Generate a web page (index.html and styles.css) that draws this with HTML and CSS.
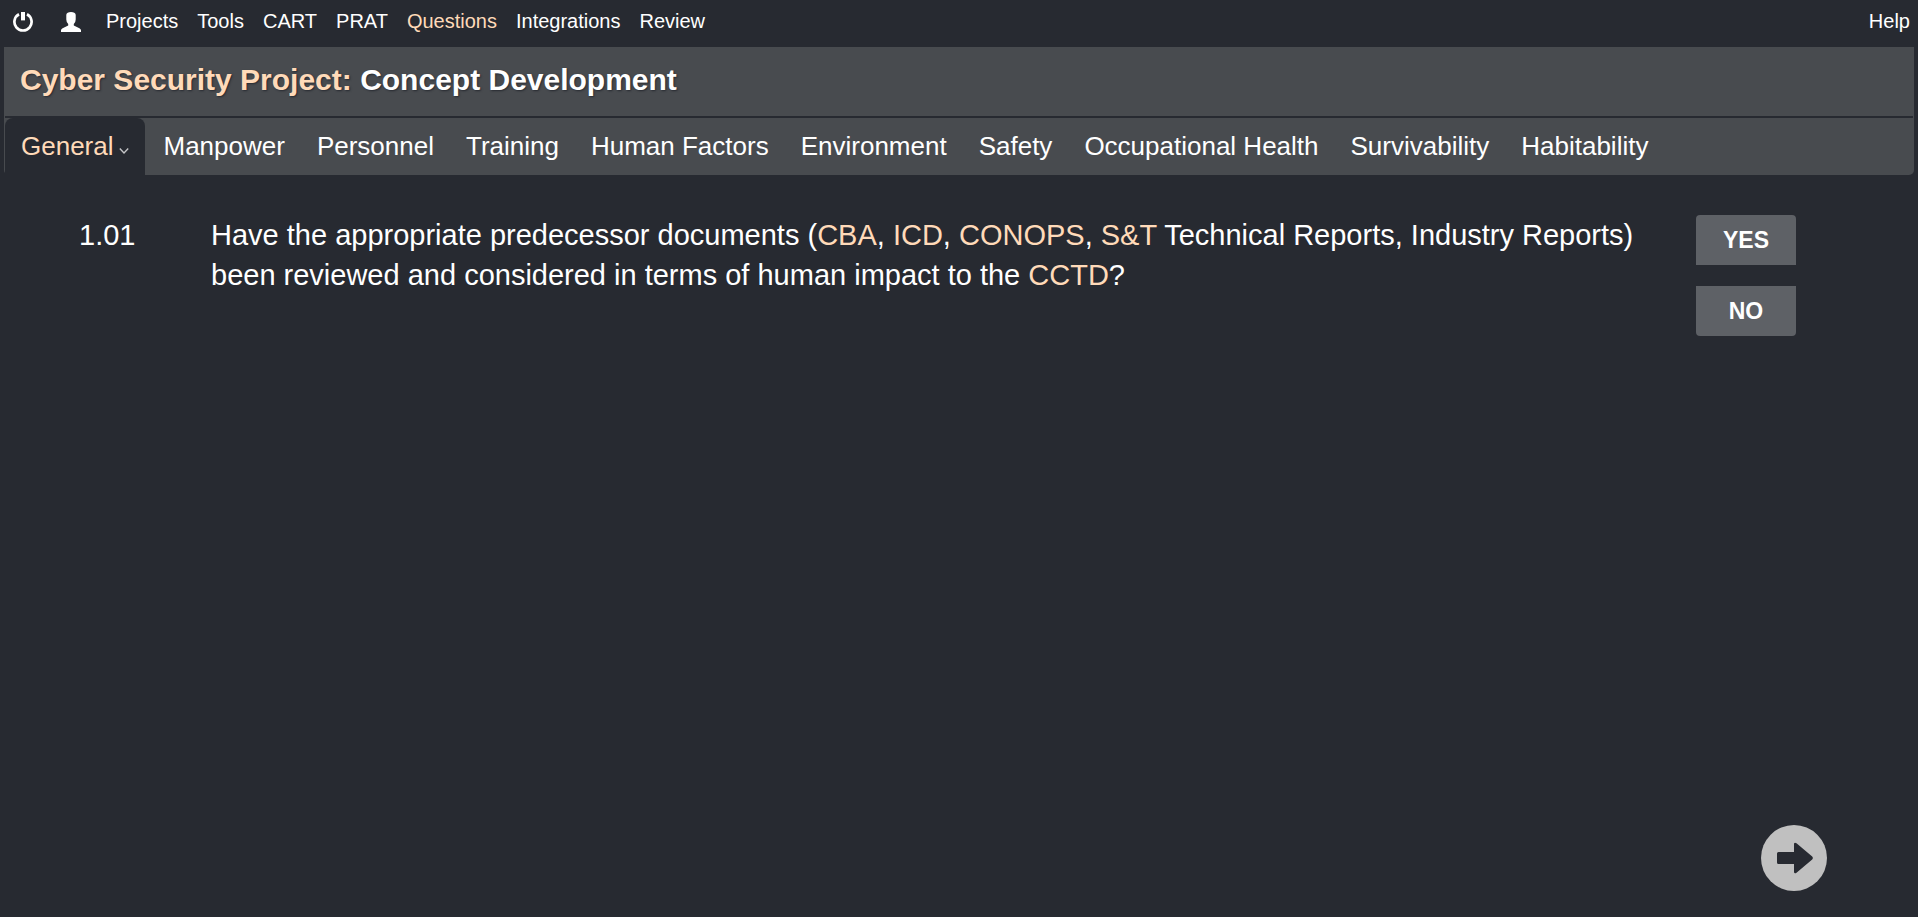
FILE: index.html
```html
<!DOCTYPE html>
<html lang="en">
<head>
<meta charset="utf-8">
<title>Cyber Security Project: Concept Development</title>
<link rel="stylesheet" href="styles.css">
</head>
<body>
<nav class="menu">
  <a class="menu-icon" href="#" aria-label="Log out"><svg width="20" height="20" viewBox="0 0 20 20"><path d="M6 2.300A8.600 8.600 0 1 0 14 2.300" fill="none" stroke="#fff" stroke-width="2.700"/><rect x="8" y="0" width="4" height="8.400" fill="#fff"/></svg></a>
  <a class="menu-icon profile" href="#" aria-label="User profile"><svg width="20" height="20" viewBox="0 0 20 20"><path d="M5.300 2.800Q5.800 0 10 0T14.700 2.800V7.500Q14.700 10.300 12.800 12V13.400L18.400 16.200Q20 17 20 18.200V20H0V18.200Q0 17 1.600 16.200L7.200 13.400V12Q5.300 10.300 5.300 7.500Z" fill="#fff"/></svg></a>
  <a href="#">Projects</a>
  <a href="#">Tools</a>
  <a href="#">CART</a>
  <a href="#">PRAT</a>
  <a class="accent" href="#">Questions</a>
  <a href="#">Integrations</a>
  <a href="#">Review</a>
  <a class="help" href="#">Help</a>
</nav>
<header class="panel">
  <h1 class="title"><span class="accent">Cyber Security Project:</span> Concept Development</h1>
  <nav class="tabs">
    <a class="tab active" href="#">General<svg class="chevron" width="10" height="8" viewBox="0 0 10 8"><path d="M.8 1.600L5 6L9.200 1.600" fill="none" stroke="#c4c5c7" stroke-width="1.400"/></svg></a>
    <a class="tab" href="#">Manpower</a>
    <a class="tab" href="#">Personnel</a>
    <a class="tab" href="#">Training</a>
    <a class="tab" href="#">Human Factors</a>
    <a class="tab" href="#">Environment</a>
    <a class="tab" href="#">Safety</a>
    <a class="tab" href="#">Occupational Health</a>
    <a class="tab" href="#">Survivability</a>
    <a class="tab" href="#">Habitability</a>
  </nav>
</header>
<main class="question">
  <span class="number">1.01</span>
  <p class="text">Have the appropriate predecessor documents (<a class="accent" href="#">CBA</a>, <a class="accent" href="#">ICD</a>, <a class="accent" href="#">CONOPS</a>, <a class="accent" href="#">S&amp;T</a> Technical Reports, Industry Reports) been reviewed and considered in terms of human impact to the <a class="accent" href="#">CCTD</a>?</p>
  <div class="answers">
    <button class="answer yes" type="button">YES</button>
    <button class="answer no" type="button">NO</button>
  </div>
</main>
<footer class="footer">
  <button class="next" type="button" aria-label="Next question"><svg width="66" height="66" viewBox="0 0 66 66"><circle cx="33" cy="33" r="33" fill="#c0c0c0"/><path d="M17.500 27H33V18.800Q33.500 17 35.500 18.300L51.200 31.500Q52.500 33 51.200 34.500L35.500 47.700Q33.500 49 33 47.200V39H17.500Q16 39 16 37.500V28.500Q16 27 17.500 27Z" fill="#272a31"/></svg></button>
</footer>
</body>
</html>
```
FILE: styles.css
```css
* {
  box-sizing: border-box;
}

body {
  margin: 0;
  min-height: 100vh;
  display: flex;
  flex-direction: column;
  background: #272a31;
  color: #fff;
  font-family: "Liberation Sans", Arial, sans-serif;
}

a {
  color: inherit;
  text-decoration: none;
}

.accent {
  color: #ffdab9;
}

.menu {
  display: flex;
  align-items: center;
  gap: 19px;
  height: 47px;
  padding: 0 8px 4px 13px;
  font-size: 20px;
}

.menu-icon {
  display: flex;
}

.profile {
  margin: 0 6px 0 9px;
}

.help {
  margin-left: auto;
}

.panel {
  margin: 0 4px;
  padding: 0 1px;
  border-radius: 0 0 5px 5px;
  background: #484b4f;
}

.title {
  margin: 0;
  padding: 16px 15px 19px;
  border-bottom: 2px solid #272a31;
  font-size: 30px;
  line-height: 34px;
  text-shadow: 1px 1px 2px #272a31;
}

.tabs {
  display: flex;
}

.tab {
  padding: 13px 16px 14px;
  font-size: 26px;
  line-height: 30px;
}

.active {
  margin-right: 3px;
  border-radius: 8px 8px 0 0;
  background: #272a31;
  color: #ffdab9;
}

.chevron {
  margin-left: 5px;
}

.question {
  display: flex;
  align-items: flex-start;
  padding: 40px 122px 0 79px;
}

.number {
  width: 132px;
}

.number,
.text {
  font-size: 29px;
  line-height: 40px;
}

.text {
  flex: 1;
  margin: 0;
  padding-right: 56px;
}

.answers {
  display: grid;
  gap: 21px;
}

.answer {
  width: 100px;
  height: 50px;
  border: 0;
  background: #5e6166;
  color: #fff;
  font: bold 23px "Liberation Sans", Arial, sans-serif;
}

.yes {
  border-radius: 4px 4px 0 0;
}

.no {
  border-radius: 0 0 4px 4px;
}

.footer {
  display: flex;
  justify-content: flex-end;
  margin-top: auto;
  padding: 0 91px 26px;
}

.next {
  display: flex;
  padding: 0;
  border: 0;
  border-radius: 50%;
  background: none;
}
```
